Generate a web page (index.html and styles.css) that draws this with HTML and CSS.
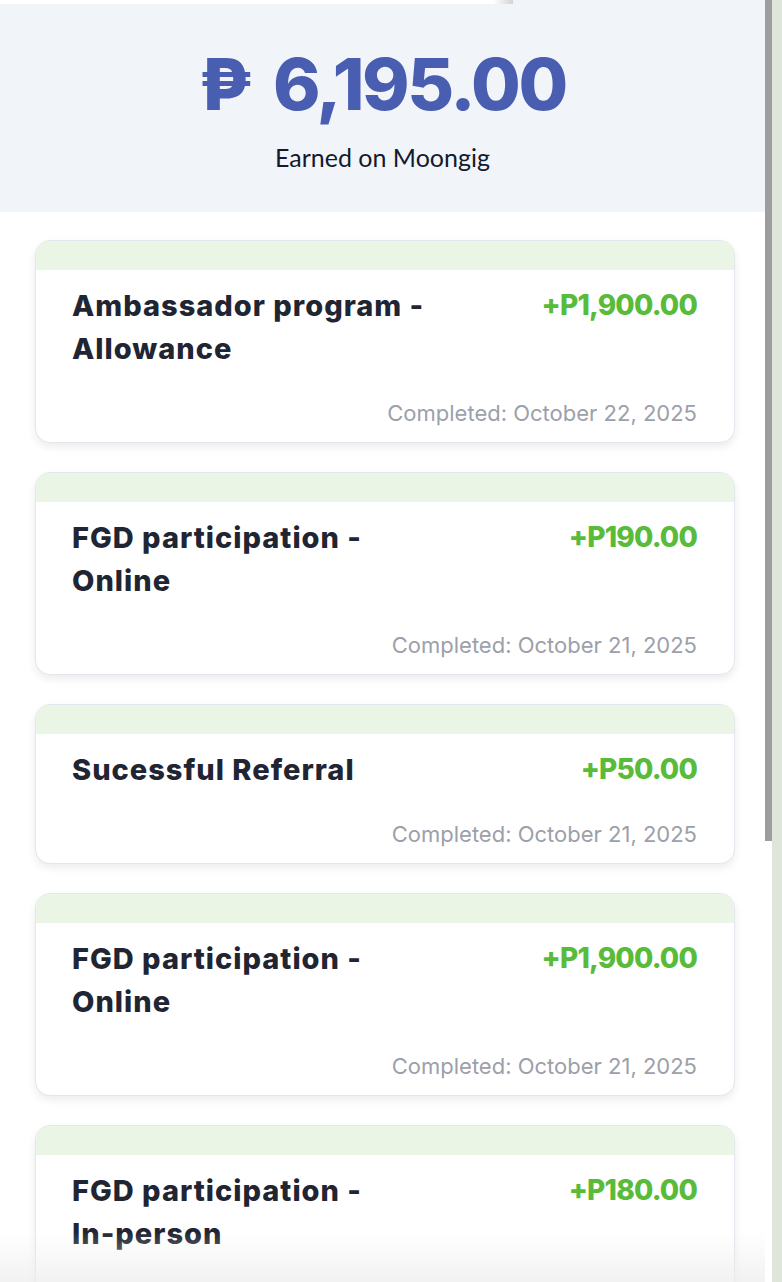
FILE: index.html
```html
<!DOCTYPE html>
<html lang="en">
<head>
<meta charset="utf-8">
<title>Earnings</title>
<link rel="stylesheet" href="styles.css">
</head>
<body>
<div class="frame">
  <main class="page">
    <header class="hero">
      <div class="topstrip"></div>
      <div class="total">₱ 6,195.00</div>
      <div class="caption">Earned on Moongig</div>
    </header>
    <section class="list">
      <article class="card">
        <div class="band"></div>
        <div class="body">
          <div class="row">
            <h2 class="title">Ambassador program -<br>Allowance</h2>
            <div class="amount">+P1,900.00</div>
          </div>
          <div class="date">Completed: October 22, 2025</div>
        </div>
      </article>
      <article class="card">
        <div class="band"></div>
        <div class="body">
          <div class="row">
            <h2 class="title">FGD participation -<br>Online</h2>
            <div class="amount">+P190.00</div>
          </div>
          <div class="date">Completed: October 21, 2025</div>
        </div>
      </article>
      <article class="card">
        <div class="band"></div>
        <div class="body">
          <div class="row">
            <h2 class="title">Sucessful Referral</h2>
            <div class="amount">+P50.00</div>
          </div>
          <div class="date">Completed: October 21, 2025</div>
        </div>
      </article>
      <article class="card">
        <div class="band"></div>
        <div class="body">
          <div class="row">
            <h2 class="title">FGD participation -<br>Online</h2>
            <div class="amount">+P1,900.00</div>
          </div>
          <div class="date">Completed: October 21, 2025</div>
        </div>
      </article>
      <article class="card">
        <div class="band"></div>
        <div class="body">
          <div class="row">
            <h2 class="title">FGD participation -<br>In-person</h2>
            <div class="amount">+P180.00</div>
          </div>
          <div class="date">Completed: October 20, 2025</div>
        </div>
      </article>
    </section>
    <div class="fade"></div>
  </main>
  <div class="scrollbar">
    <div class="thumb-col"><div class="thumb"></div></div>
    <div class="track"></div>
  </div>
</div>
</body>
</html>
```
FILE: styles.css
```css
* { box-sizing: border-box; }
html, body { margin: 0; padding: 0; height: 1282px; overflow: hidden; background: #ffffff; }
body { font-family: Inter, "Liberation Sans", sans-serif; }

.frame { display: flex; width: 782px; height: 1282px; }

.page { position: relative; width: 765px; height: 1282px; overflow: hidden; background: #ffffff; }

.hero { background: #f1f4f9; height: 212px; display: flex; flex-direction: column; align-items: center; }
.topstrip { align-self: flex-start; width: 513px; height: 4px; background: linear-gradient(to right, #ffffff 0, #ffffff 494px, #d2d2d2 513px); }
.total { margin-top: 36px; font-family: Inter, sans-serif; font-weight: 800; font-size: 72px; line-height: 88px; color: #4a5eb1; letter-spacing: -2.4px; word-spacing: 10px; }
.caption { margin-top: 14px; font-family: Lato, "Open Sans", sans-serif; font-size: 25px; line-height: 30px; color: #141a2b; }

.list { display: flex; flex-direction: column; gap: 29px; padding: 28px 30px 0 35px; }

.card { border: 1px solid #e3e6ec; border-radius: 15px; overflow: hidden; background: #ffffff; box-shadow: 0 4px 8px rgba(0, 0, 0, 0.08); }
.band { height: 29px; background: #eaf5e5; }
.body { padding: 14px 37px 16px 36px; }
.row { display: flex; justify-content: space-between; align-items: flex-start; gap: 20px; }
.title { margin: 0; font-family: Inter, sans-serif; font-weight: 800; font-size: 29px; line-height: 43px; color: #1f2532; letter-spacing: 1px; }
.amount { font-family: Inter, sans-serif; font-weight: 800; font-size: 28px; line-height: 43px; color: #59bb3a; letter-spacing: -0.8px; }
.date { margin-top: 30px; text-align: right; font-family: Inter, sans-serif; font-size: 22px; line-height: 26px; color: #9ca0aa; }

.fade { position: absolute; left: 0; right: 0; bottom: 0; height: 50px; background: linear-gradient(to bottom, rgba(240, 240, 242, 0), rgba(236, 236, 238, 0.7)); }

.scrollbar { display: flex; width: 17px; height: 1282px; }
.thumb-col { width: 7px; background: #ffffff; }
.thumb { height: 841px; background: #9d9d9d; }
.track { width: 10px; background: #dfe5da; }
```
